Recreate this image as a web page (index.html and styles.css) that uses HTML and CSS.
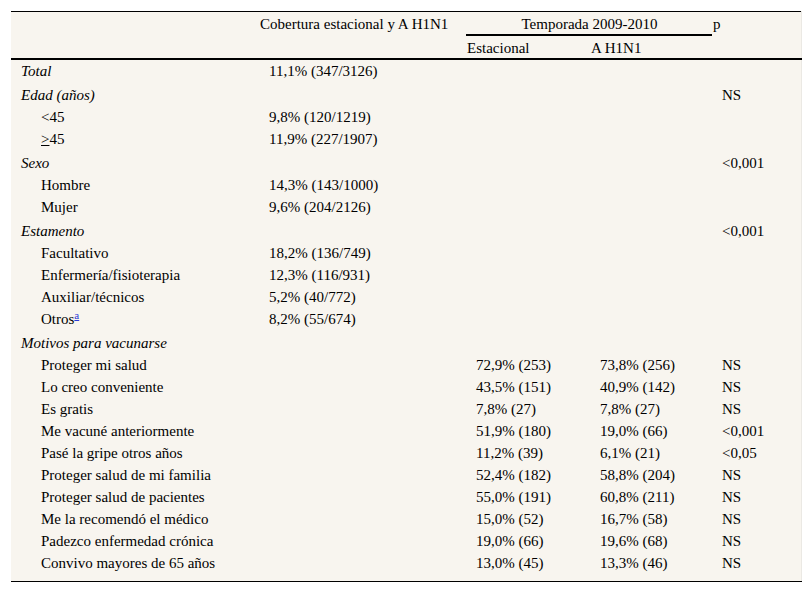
FILE: index.html
```html
<!DOCTYPE html>
<html lang="es">
<head>
<meta charset="utf-8">
<title>Tabla</title>
<link rel="stylesheet" href="styles.css">
</head>
<body>
<div class="wrap">
<table class="tbl">
  <colgroup>
    <col class="c1"><col class="c2"><col class="c3"><col class="c4"><col class="c5">
  </colgroup>
  <thead>
    <tr class="h1">
      <th rowspan="2"></th>
      <th rowspan="2" class="top">Cobertura estacional y A H1N1</th>
      <th colspan="2" class="span">Temporada 2009-2010</th>
      <th rowspan="2" class="top">p</th>
    </tr>
    <tr class="h2">
      <th>Estacional</th>
      <th>A H1N1</th>
    </tr>
  </thead>
  <tbody>
    <tr class="cat"><td><i>Total</i></td><td>11,1% (347/3126)</td><td></td><td></td><td></td></tr>
    <tr class="cat"><td><i>Edad (años)</i></td><td></td><td></td><td></td><td>NS</td></tr>
    <tr><td class="sub">&lt;45</td><td>9,8% (120/1219)</td><td></td><td></td><td></td></tr>
    <tr><td class="sub"><u>&gt;</u>45</td><td>11,9% (227/1907)</td><td></td><td></td><td></td></tr>
    <tr class="cat"><td><i>Sexo</i></td><td></td><td></td><td></td><td>&lt;0,001</td></tr>
    <tr><td class="sub">Hombre</td><td>14,3% (143/1000)</td><td></td><td></td><td></td></tr>
    <tr><td class="sub">Mujer</td><td>9,6% (204/2126)</td><td></td><td></td><td></td></tr>
    <tr class="cat"><td><i>Estamento</i></td><td></td><td></td><td></td><td>&lt;0,001</td></tr>
    <tr><td class="sub">Facultativo</td><td>18,2% (136/749)</td><td></td><td></td><td></td></tr>
    <tr><td class="sub">Enfermería/fisioterapia</td><td>12,3% (116/931)</td><td></td><td></td><td></td></tr>
    <tr><td class="sub">Auxiliar/técnicos</td><td>5,2% (40/772)</td><td></td><td></td><td></td></tr>
    <tr><td class="sub">Otros<sup><a href="#fn-a" class="fn">a</a></sup></td><td>8,2% (55/674)</td><td></td><td></td><td></td></tr>
    <tr class="cat"><td><i>Motivos para vacunarse</i></td><td></td><td></td><td></td><td></td></tr>
    <tr><td class="sub">Proteger mi salud</td><td></td><td>72,9% (253)</td><td>73,8% (256)</td><td>NS</td></tr>
    <tr><td class="sub">Lo creo conveniente</td><td></td><td>43,5% (151)</td><td>40,9% (142)</td><td>NS</td></tr>
    <tr><td class="sub">Es gratis</td><td></td><td>7,8% (27)</td><td>7,8% (27)</td><td>NS</td></tr>
    <tr><td class="sub">Me vacuné anteriormente</td><td></td><td>51,9% (180)</td><td>19,0% (66)</td><td>&lt;0,001</td></tr>
    <tr><td class="sub">Pasé la gripe otros años</td><td></td><td>11,2% (39)</td><td>6,1% (21)</td><td>&lt;0,05</td></tr>
    <tr><td class="sub">Proteger salud de mi familia</td><td></td><td>52,4% (182)</td><td>58,8% (204)</td><td>NS</td></tr>
    <tr><td class="sub">Proteger salud de pacientes</td><td></td><td>55,0% (191)</td><td>60,8% (211)</td><td>NS</td></tr>
    <tr><td class="sub">Me la recomendó el médico</td><td></td><td>15,0% (52)</td><td>16,7% (58)</td><td>NS</td></tr>
    <tr><td class="sub">Padezco enfermedad crónica</td><td></td><td>19,0% (66)</td><td>19,6% (68)</td><td>NS</td></tr>
    <tr class="last"><td class="sub">Convivo mayores de 65 años</td><td></td><td>13,0% (45)</td><td>13,3% (46)</td><td>NS</td></tr>
  </tbody>
</table>
</div>
</body>
</html>
```
FILE: styles.css
```css
html, body {
  margin: 0;
  padding: 0;
  background: #ffffff;
}

.wrap {
  padding: 11px 11px 0 11px;
}

.tbl {
  width: 790px;
  table-layout: fixed;
  border-collapse: collapse;
  background: #f8f5ef;
  font-family: "Liberation Serif", "Times New Roman", serif;
  font-size: 15px;
  line-height: 17px;
  color: #000;
  border-top: 1px solid #000;
  border-bottom: 1px solid #000;
  border-right: 1px solid #ebe9e4;
}

.c1 { width: 248px; }
.c2 { width: 207px; }
.c3 { width: 124px; }
.c4 { width: 122px; }
.c5 { width: 89px; }

.tbl th {
  font-weight: normal;
  text-align: left;
  padding: 4px 0 1px 1px;
  vertical-align: top;
}

.tbl .h1 th.span {
  text-align: center;
  border-bottom: 2px solid #000;
  padding-bottom: 1px;
}

.tbl .h2 th {
  padding: 4px 0 1px 1px;
}

.tbl thead {
  border-bottom: 2px solid #000;
}

.tbl td {
  padding: 1px 0 4px 10px;
  vertical-align: top;
  white-space: nowrap;
}

.tbl tr.cat td {
  padding-top: 3px;
}

.tbl td.sub {
  padding-left: 30px;
}

.tbl tr.last td {
  padding-bottom: 9px;
}

.fn {
  color: #2a3bd8;
  text-decoration: underline;
  font-size: 11px;
}

sup {
  line-height: 0;
  vertical-align: 5px;
}
```
